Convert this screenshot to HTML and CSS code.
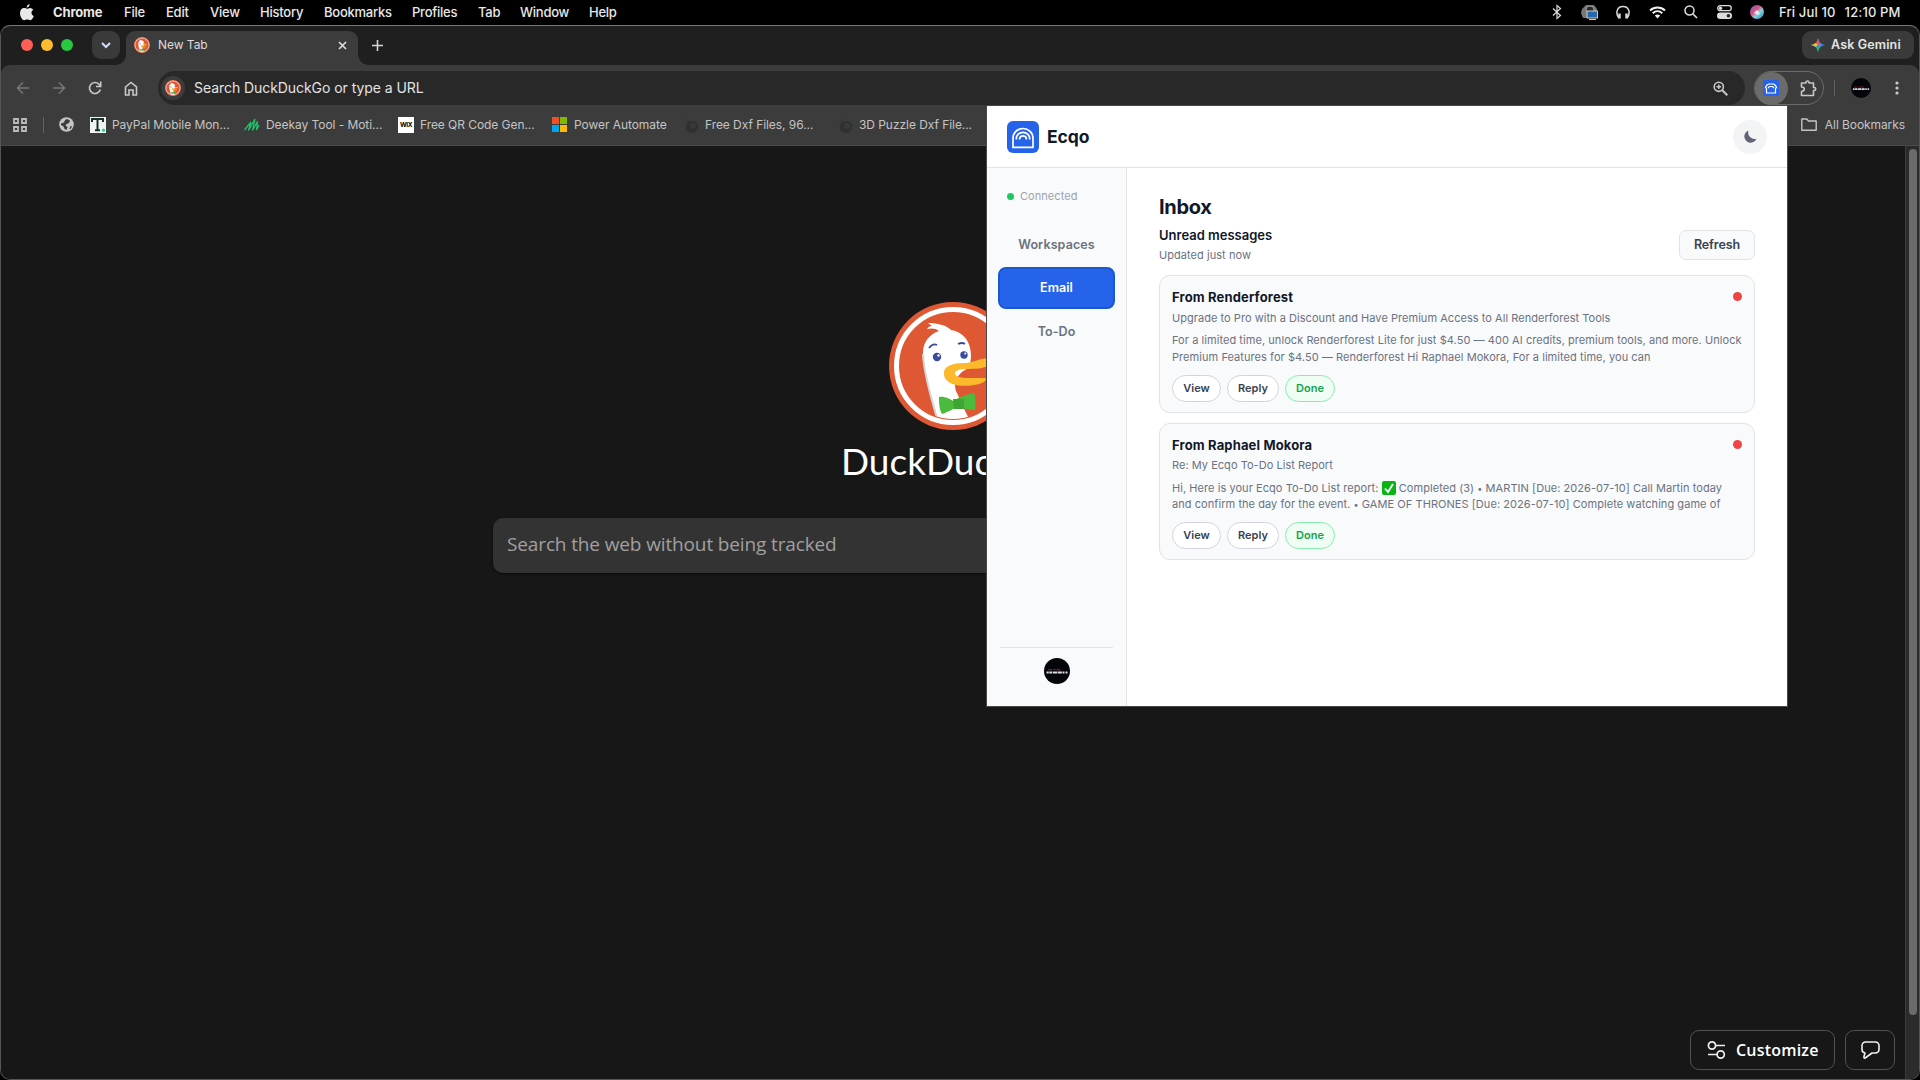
FILE: index.html
```html
<!DOCTYPE html>
<html lang="en">
<head>
<meta charset="utf-8">
<title>New Tab</title>
<link rel="stylesheet" href="styles.css">
</head>
<body>
<svg width="0" height="0" class="defs">
  <defs>
    <linearGradient id="siri" x1="0" y1="0" x2="1" y2="1"><stop offset="0" stop-color="#5b63c9"/><stop offset=".4" stop-color="#e0527e"/><stop offset=".6" stop-color="#7fd3e0"/><stop offset="1" stop-color="#1787a8"/></linearGradient>
    <clipPath id="disc"><circle cx="64" cy="64" r="53"/></clipPath>
    <symbol id="duck" viewBox="0 0 128 128">
      <circle cx="64" cy="64" r="64" fill="#de5833"/>
      <circle cx="64" cy="64" r="56.500" fill="none" stroke="#fff" stroke-width="5"/>
      <g clip-path="url(#disc)">
        <path d="M49 118C43 96 35 72 34 52c-.5-12 7-20 16-23-3-3-8-3-12-2 1-2 3-3 5-3l-4-3c9 0 18 2 23 7 13 2 20 12 20 26l-1 12c-10 2-20 15-12 27 3 9 9 19 13 28z" fill="#fff"/>
        <path d="M34 52c1 20 8 44 14 64" fill="none" stroke="#d5d7d8" stroke-width="2"/>
      </g>
      <path d="M55 71c0-9 13-10 22-10 9-1 14-5 24-5 6 1 1 8-8 10-9 2-26-1-27 5-1 6 16 5 30 5 3 2-2 6-11 7-17 3-31-2-30-12z" fill="#fcb92b"/>
      <path d="M50 95c5-1 11 2 14 4 6-4 15-7 21-8 2 5 2 13 1 17-5 0-12-2-17-3-5 2-12 6-16 7-3-5-3-12-3-17z" fill="#4cba3c"/>
      <path d="M64 97h11v10H65z" fill="#3ea532"/>
      <circle cx="48" cy="55" r="4.200" fill="#394a9f"/><circle cx="75" cy="53" r="3.700" fill="#394a9f"/>
      <circle cx="49.500" cy="53.500" r="1.200" fill="#fff"/><circle cx="76.300" cy="51.500" r="1.100" fill="#fff"/>
      <path d="M40 46q4-5 8-3M69 42q4-2 7 0" fill="none" stroke="#394a9f" stroke-width="1.800"/>
    </symbol>
    <symbol id="ecqo" viewBox="0 0 32 32">
      <rect width="32" height="32" rx="6" fill="#2563eb"/>
      <path d="M6 26.300V17a10 9.500 0 0 1 20 0v9.300zM9.300 18.500v-1a6.700 6.200 0 0 1 13.400 0v1" fill="none" stroke="#fff" stroke-width="1.700"/>
      <path d="M12.600 18.500v-.5a3.400 3.200 0 0 1 6.800 0v.5" fill="none" stroke="#fff" stroke-width="1.700"/>
    </symbol>
    <symbol id="avatar" viewBox="0 0 26 26">
      <circle cx="13" cy="13" r="13" fill="#03050a"/>
      <path d="M4 11.800h4M9.500 11.500h2M12.500 11.800h4" stroke="#a5262f" stroke-width="1"/>
      <path d="M2.500 14.500h2.200M5.300 14.500h3M9 14.500h4.200M13.800 14.500h4M18.500 14.500h2M21.500 14.500h2" stroke="#ddd" stroke-width="2.200"/>
    </symbol>
    <symbol id="drop" viewBox="0 0 16 16"><path d="M3 1l3 4c2-2 7-1 8 3 1 4-2 8-6 8s-7-3-6-7c0-2 1-3 2-4z" fill="#2f3131"/><circle cx="9" cy="9" r="3" fill="#383a3a"/></symbol>
  </defs>
</svg>

<header class="menubar">
  <svg class="apple" width="14" height="17" viewBox="0 0 14 17"><path d="M9.600 0c.2 1.700-1.200 3.500-2.900 3.500C6.500 1.900 8 .2 9.600 0zM7.100 4.700c.7 0 1.500-.8 2.800-.8 1.400 0 2.600.7 3.300 1.800-2.500 1.500-2.200 5.200.6 6.200-.6 1.700-2 4.200-3.500 4.300-1.200 0-1.600-.7-3-.7s-1.900.7-3 .7C2.400 16.200 0 12.600 0 9.200 0 5.900 2 4 4 4c1.300 0 2.300.7 3.100.7z" fill="#e8e8e8"/></svg>
  <nav class="menus">
    <b class="m1">Chrome</b><span class="m2">File</span><span class="m3">Edit</span><span class="m4">View</span><span class="m5">History</span><span class="m6">Bookmarks</span><span class="m7">Profiles</span><span class="m8">Tab</span><span class="m9">Window</span><span class="m10">Help</span>
  </nav>
  <div class="status">
    <svg width="10" height="16" viewBox="0 0 10 16"><path d="M1 4.500l7.500 7L5 14.500v-13l3.500 3L1 11.500" fill="none" stroke="#ddd" stroke-width="1.200"/></svg>
    <svg width="17" height="16" viewBox="0 0 17 16"><path d="M1 5l4-4h8l3 4v3H7v6H2L0 9z" fill="#777"/><circle cx="9" cy="6" r="4" fill="#292929" stroke="#999"/><rect x="6" y="7" width="10.500" height="7" fill="#2668ae" stroke="#ccc"/><path d="M8 15.500h7" stroke="#ccc"/></svg>
    <svg width="14" height="15" viewBox="0 0 14 15"><path d="M3 13C-1 8 1 1.500 7 1.500S15 8 11 13" fill="none" stroke="#ddd" stroke-width="1.500"/><path d="M3.500 8.500v5M10.500 8.500v5" stroke="#ddd" stroke-width="2.400"/></svg>
    <svg width="17" height="13" viewBox="0 0 17 13"><path d="M1 4.500c4.200-4 10.800-4 15 0M3.700 7.300c2.800-2.600 6.800-2.600 9.600 0" fill="none" stroke="#eee" stroke-width="2"/><path d="M5.800 9.500q2.700-2.200 5.400 0L8.500 12.500z" fill="#eee"/></svg>
    <svg width="14" height="14" viewBox="0 0 14 14"><circle cx="5.500" cy="5.500" r="4.500" fill="none" stroke="#ddd" stroke-width="1.500"/><path d="M9 9l4 4" stroke="#ddd" stroke-width="1.700"/></svg>
    <svg width="15" height="14" viewBox="0 0 15 14"><rect x=".7" y=".7" width="13.600" height="5" rx="2.500" fill="none" stroke="#ddd" stroke-width="1.300"/><circle cx="3.500" cy="3.200" r="1.700" fill="#ddd"/><rect y="7.500" width="15" height="6.500" rx="3.200" fill="#ddd"/><circle cx="11.400" cy="10.700" r="1.800" fill="#222"/></svg>
    <svg width="14" height="14" viewBox="0 0 14 14"><circle cx="7" cy="7" r="7" fill="url(#siri)"/><path d="M4 8q3-5 5-1t-3 2z" fill="#fff" opacity=".75"/></svg>
  </div>
  <div class="clock"><span>Fri Jul 10</span><span>12:10 PM</span></div>
</header>

<div class="window">
  <div class="tabstrip">
    <div class="lights"><i class="red"></i><i class="yellow"></i><i class="green"></i></div>
    <div class="chev"><svg width="10" height="7" viewBox="0 0 10 7"><path d="M1 1l4 4 4-4" fill="none" stroke="#d3dcff" stroke-width="2"/></svg></div>
    <div class="tab">
      <svg width="16" height="16"><use href="#duck"/></svg>
      <span class="tabtitle">New Tab</span>
      <svg class="close" width="9" height="9" viewBox="0 0 9 9"><path d="M1 1l7 7M8 1L1 8" stroke="#dedede" stroke-width="1.600"/></svg>
    </div>
    <svg class="plus" width="11" height="11" viewBox="0 0 11 11"><path d="M5.500 0v11M0 5.500h11" stroke="#d5d5d5" stroke-width="1.600"/></svg>
    <div class="gemini"><svg width="14" height="14" viewBox="0 0 14 14"><path d="M7 0q1 6 7 7-6 1-7 7-1-6-7-7 6-1 7-7z" fill="#4a86f0"/><path d="M7 0q.4 3 2 4.800L7 7 5 4.800Q6.600 3 7 0z" fill="#ea5348"/><path d="M0 7q3-.4 4.800-2L7 7 4.800 9Q3 7.400 0 7z" fill="#f3bd2c"/><path d="M7 14q-.4-3-2.200-5L7 7l1.500 2.500Q7.200 12 7 14z" fill="#2fae62"/></svg><span>Ask Gemini</span></div>
  </div>

  <div class="toolbar">
    <div class="nav">
      <svg width="14" height="14" viewBox="0 0 14 14"><path d="M13 7H2M7 1.500L1.500 7 7 12.500" fill="none" stroke="#777" stroke-width="1.500"/></svg>
      <svg width="14" height="14" viewBox="0 0 14 14"><path d="M1 7h11M7 1.500L12.500 7 7 12.500" fill="none" stroke="#777" stroke-width="1.500"/></svg>
      <svg width="14" height="14" viewBox="0 0 14 14"><path d="M12.300 8.500A5.500 5.500 0 1 1 11 3.200L12.500 5" fill="none" stroke="#c8c8c8" stroke-width="1.600"/><path d="M12.700.5V5.500H8" fill="none" stroke="#c8c8c8" stroke-width="1.600"/></svg>
      <svg width="14" height="15" viewBox="0 0 14 15"><path d="M1.500 6L7 1.500 12.500 6v8H9V9H5v5H1.500z" fill="none" stroke="#c8c8c8" stroke-width="1.600"/></svg>
    </div>
    <div class="omnibox">
      <span class="engine"><svg width="16" height="16"><use href="#duck"/></svg></span>
      <span class="hint">Search DuckDuckGo or type a URL</span>
      <svg class="mag" width="15" height="15" viewBox="0 0 15 15"><circle cx="5.800" cy="5.800" r="4.600" fill="none" stroke="#c8c8c8" stroke-width="1.600"/><path d="M9.300 9.300l5 5" stroke="#c8c8c8" stroke-width="2"/><path d="M5.800 3.500v4.600M3.500 5.800h4.600" stroke="#c8c8c8" stroke-width="1.500"/></svg>
    </div>
    <div class="exts">
      <span class="extactive"><svg width="16" height="16" viewBox="0 0 16 16"><rect width="16" height="16" rx="1.500" fill="#2563eb"/><path d="M3.500 13V8.500L2.500 7.500l1-2 2-1.500h5l2 1.500 1 2-1 1V13zM5 8l1.500-1.500h3L11 8" fill="none" stroke="#fff" stroke-width="1.200"/></svg></span>
      <svg class="puzzle" width="17" height="17" viewBox="0 0 17 17"><path d="M1.500 3h4.500V2.500a1.500 1.500 0 0 1 3 0V3h4.500v4.500h.7a1.500 1.500 0 0 1 0 3h-.7V15.500H1.500V11.500q2.800-.5 2.800-2.500T1.500 7z" fill="none" stroke="#c8c8c8" stroke-width="1.600" stroke-linejoin="round"/></svg>
    </div>
    <i class="divider"></i>
    <svg class="profile" width="20" height="20"><use href="#avatar"/></svg>
    <svg class="dots" width="4" height="14" viewBox="0 0 4 14"><circle cx="2" cy="2" r="1.600" fill="#ccc"/><circle cx="2" cy="7" r="1.600" fill="#ccc"/><circle cx="2" cy="12" r="1.600" fill="#ccc"/></svg>
  </div>

  <div class="bookmarks">
    <svg class="apps" width="14" height="14" viewBox="0 0 14 14"><path d="M1 1h4v4H1zM9 1h4v4H9zM1 9h4v4H1zM9 9h4v4H9z" fill="none" stroke="#bbb" stroke-width="1.800"/></svg>
    <i class="divider"></i>
    <svg class="globe" width="15" height="15" viewBox="0 0 15 15"><circle cx="7.500" cy="7.500" r="7.300" fill="#c4c4c4"/><path d="M8 2l3 1.500-1 2.500-2.500 1-1 1.500L8.500 10l-1 3-2-1-1-2.500L2 8V6.500l3-1L6 3zM11 9.500l2-.5-1 2.500-1.500 1z" fill="#3c3c3c"/></svg>
    <a class="bm b1"><svg width="16" height="16" viewBox="0 0 16 16"><rect width="16" height="16" fill="#f1f4f2"/><path d="M2 5V2h11v3M7.500 2v11M5 13.300h5" fill="none" stroke="#17302b" stroke-width="2"/><circle cx="13.500" cy="13.200" r="1.600" fill="#2ccf8e"/></svg><span>PayPal Mobile Mon...</span></a>
    <a class="bm b2"><svg width="16" height="14" viewBox="0 0 16 14"><path d="M.5 12L7 4 4.500 12.500 11 1 8.500 12.500 13.500 3.500 12.500 12l2.500-5" fill="none" stroke="#20c66b" stroke-width="1.200"/></svg><span>Deekay Tool - Moti...</span></a>
    <a class="bm b3"><i class="wix">WIX</i><span>Free QR Code Gen...</span></a>
    <a class="bm b4"><svg width="15" height="15" viewBox="0 0 15 15"><path d="M0 0h7v7H0z" fill="#f25022"/><path d="M8 0h7v7H8z" fill="#7fba00"/><path d="M0 8h7v7H0z" fill="#00a4ef"/><path d="M8 8h7v7H8z" fill="#ffb900"/></svg><span>Power Automate</span></a>
    <a class="bm b5"><svg width="16" height="16"><use href="#drop"/></svg><span>Free Dxf Files, 96...</span></a>
    <a class="bm b6"><svg width="16" height="16"><use href="#drop"/></svg><span>3D Puzzle Dxf File...</span></a>
    <a class="all"><svg width="16" height="13" viewBox="0 0 16 13"><path d="M.8 1h5l1.600 2h7.800v9.200H.8z" fill="none" stroke="#c4c4c4" stroke-width="1.400" stroke-linejoin="round"/></svg><span>All Bookmarks</span></a>
  </div>

  <div class="viewport">
    <main class="page">
      <svg class="ddg" width="128" height="128"><use href="#duck"/></svg>
      <div class="brand">DuckDuckGo</div>
      <div class="search">Search the web without being tracked</div>
      <div class="actions">
        <button class="customize"><svg width="19" height="18" viewBox="0 0 19 18"><circle cx="5" cy="4.500" r="3.600" fill="none" stroke="#eee" stroke-width="1.700"/><circle cx="13.700" cy="13.500" r="3.600" fill="none" stroke="#eee" stroke-width="1.700"/><path d="M9 4.500h9M1 13.500h9" stroke="#eee" stroke-width="1.700"/></svg><span>Customize</span></button>
        <button class="feedback"><svg width="19" height="18" viewBox="0 0 19 18"><path d="M4.500 1h10a3.500 3.500 0 0 1 3.500 3.500v4a3.500 3.500 0 0 1-3.500 3.500H11L4.200 17Q2.500 17.500 3 15.500L4 12Q1 11.500 1 8.500v-4A3.500 3.500 0 0 1 4.500 1z" fill="none" stroke="#eee" stroke-width="1.600" stroke-linejoin="round"/></svg></button>
      </div>
    </main>
    <div class="scroll"><i></i></div>
  </div>
</div>

<section class="popup">
  <header class="pophead">
    <svg width="32" height="32"><use href="#ecqo"/></svg>
    <span class="popname">Ecqo</span>
    <span class="theme"><svg width="13" height="13" viewBox="0 0 13 13"><path d="M4.500.5A6.300 6.300 0 1 0 12.500 8.800 6.500 6.500 0 0 1 4.500.5z" fill="#606477"/></svg></span>
  </header>
  <div class="popbody">
    <aside class="side">
      <div class="connected"><i></i><span>Connected</span></div>
      <div class="item ws">Workspaces</div>
      <div class="item active">Email</div>
      <div class="item">To-Do</div>
      <div class="user"><svg width="26" height="26"><use href="#avatar"/></svg></div>
    </aside>
    <div class="inbox">
      <h1><span>Inbox</span></h1>
      <div class="unread">
        <div><h2>Unread messages</h2><p>Updated just now</p></div>
        <button class="refresh">Refresh</button>
      </div>
      <article class="card">
        <div class="from"><h3>From Renderforest</h3><i></i></div>
        <div class="subject">Upgrade to Pro with a Discount and Have Premium Access to All Renderforest Tools</div>
        <div class="excerpt"><div>For a limited time, unlock Renderforest Lite for just $4.50 — 400 AI credits, premium tools, and more. Unlock</div><div>Premium Features for $4.50 — Renderforest Hi Raphael Mokora, For a limited time, you can</div></div>
        <div class="pills"><button class="view">View</button><button class="reply">Reply</button><button class="done">Done</button></div>
      </article>
      <article class="card">
        <div class="from"><h3>From Raphael Mokora</h3><i></i></div>
        <div class="subject">Re: My Ecqo To-Do List Report</div>
        <div class="excerpt"><div>Hi, Here is your Ecqo To-Do List report: <svg class="check" width="14" height="14" viewBox="0 0 14 14"><rect width="14" height="14" rx="2" fill="#08b514"/><path d="M3 7.500l3 3.500L11 3" fill="none" stroke="#fff" stroke-width="1.900"/></svg> Completed (3) <small>•</small> MARTIN [Due: 2026-07-10] Call Martin today</div><div>and confirm the day for the event. <small>•</small> GAME OF THRONES [Due: 2026-07-10] Complete watching game of</div></div>
        <div class="pills"><button class="view">View</button><button class="reply">Reply</button><button class="done">Done</button></div>
      </article>
    </div>
  </div>
</section>
</body>
</html>
```
FILE: styles.css
```css
* { box-sizing: border-box; }
html, body { margin: 0; width: 1920px; height: 1080px; overflow: hidden; background: #000; }
body { font-family: Inter, "Liberation Sans", sans-serif; color: #ddd; position: relative; display: flex; flex-direction: column; white-space: nowrap; }
svg { display: block; flex: none; }
i { font-style: normal; }
button { font: inherit; margin: 0; padding: 0; cursor: pointer; }
h1, h2, h3, p { margin: 0; }
.defs { position: absolute; }

.menubar { height: 25px; display: flex; align-items: center; padding-left: 20px; font-size: 13px; line-height: 16px; font-weight: 500; color: #e8e8e8; padding-bottom: 1px; }
.apple { width: 14px; }
.menus { display: flex; margin-left: 19px; flex: 1; padding-bottom: 1px; }
.m1 { width: 71px; font-weight: 700; letter-spacing: -.15px; }
.m2 { width: 42px; } .m3 { width: 44px; } .m4 { width: 50px; } .m5 { width: 64px; }
.m6 { width: 88px; } .m7 { width: 66px; } .m8 { width: 42px; } .m9 { width: 69px; }
.menus span { letter-spacing: -.24px; }
.status { display: flex; align-items: center; justify-content: space-between; width: 212px; margin-right: 15px; }
.clock { width: 141px; display: flex; gap: 9px; letter-spacing: .15px; padding-bottom: 1px; }

.window { height: 1055px; border: 1px solid #555; border-top-color: #777; border-radius: 10px; overflow: hidden; display: flex; flex-direction: column; background: #1f1f1f; }
.tabstrip { height: 39px; flex: none; display: flex; align-items: flex-start; padding: 5px 5px 0 20px; }
.lights { display: flex; gap: 8px; height: 28px; align-items: center; }
.lights i { width: 12px; height: 12px; border-radius: 50%; }
.red { background: #ff5f57; } .yellow { background: #febc2e; } .green { background: #28c840; }
.chev { width: 28px; height: 28px; border-radius: 9px; background: #3a3a3a; display: grid; place-items: center; margin-left: 19px; }
.tab { position: relative; width: 232px; height: 34px; margin-left: 6px; border-radius: 9px 9px 0 0; background: #3c3c3c; display: flex; align-items: center; padding: 0 11px 6px 8px; }
.tab::before, .tab::after { content: ""; position: absolute; bottom: 0; width: 10px; height: 10px; }
.tab::before { left: -10px; background: radial-gradient(circle at 0 0, transparent 9.500px, #3c3c3c 10px); }
.tab::after { right: -10px; background: radial-gradient(circle at 100% 0, transparent 9.500px, #3c3c3c 10px); }
.tabtitle { margin-left: 8px; font-size: 12px; line-height: 14px; padding-bottom: 1px; letter-spacing: -.05px; }
.close { margin-left: auto; }
.plus { margin: 9px 0 0 14px; }
.gemini { margin-left: auto; width: 112px; height: 28px; border-radius: 9px; background: #3a3a3a; display: flex; align-items: center; padding: 0 0 1px 9px; gap: 6px; font-size: 12.500px; font-weight: 600; letter-spacing: .15px; color: #e5e5e5; }

.toolbar { height: 46px; flex: none; background: #3c3c3c; border-radius: 9px 9px 0 0; display: flex; align-items: center; padding-left: 15px; }
.nav { display: flex; gap: 22px; align-items: center; width: 142px; }
.omnibox { width: 1587px; height: 34px; border-radius: 17px; background: #282828; display: flex; align-items: center; padding: 0 17px 0 3px; }
.engine { width: 24px; height: 24px; border-radius: 50%; background: #3c3c3c; display: grid; place-items: center; }
.hint { margin-left: 9px; font-size: 14px; line-height: 18px; padding-bottom: 1px; color: #e3e3e3; letter-spacing: -.06px; }
.mag { margin-left: auto; }
.exts { margin-left: 9px; width: 70px; height: 34px; border: 1px solid #6b6b6b; border-radius: 17px; display: flex; align-items: center; }
.extactive { width: 33px; height: 33px; border-radius: 50%; background: #6b6b6b; display: grid; place-items: center; }
.extactive svg { margin-right: 1px; }
.puzzle { margin-left: 12px; }
.divider { width: 1px; height: 16px; background: #626262; margin-left: 10px; flex: none; }
.profile { margin-left: 16px; } .dots { margin-left: 24px; }

.bookmarks { height: 35px; flex: none; background: #3c3c3c; border-bottom: 1px solid #4a4a4a; display: flex; align-items: center; padding: 0 14px 7px 12px; font-size: 12px; color: #c4c4c4; }
.bookmarks .divider { margin-left: 16px; }
.globe { margin-left: 15px; }
.bm { display: flex; align-items: center; gap: 6px; }
.b1 { margin-left: 16px; width: 154px; } .b2 { width: 154px; } .b3 { width: 154px; } .b4 { width: 132px; gap: 7px; } .b5 { width: 154px; }
.b5, .b6 { gap: 5px; }
.bm span { letter-spacing: -.06px; }
.wix { width: 16px; height: 16px; background: #fff; color: #000; font-size: 6.500px; font-weight: 700; display: grid; place-items: center; letter-spacing: -.4px; }
.all { margin-left: auto; display: flex; gap: 8px; align-items: center; letter-spacing: -.08px; }

.viewport { flex: 1; display: flex; background: #171717; }
.page { flex: 1; display: flex; flex-direction: column; align-items: center; padding-top: 156px; }
.brand { margin-top: 9px; font: 400 37px/44px Lato, sans-serif; color: #fff; width: 224px; }
.search { margin-top: 35px; width: 920px; height: 55px; border-radius: 10px; background: #333; box-shadow: 0 1px 3px #0008; color: #a0a0a0; font: 19px/53px "Open Sans", sans-serif; letter-spacing: -.13px; padding-left: 14px; }
.actions { margin-top: auto; align-self: flex-end; display: flex; gap: 10px; padding: 0 10px 9px 0; }
.actions button { height: 40px; background: #171717; border: 1px solid #515151; border-radius: 9px; color: #fff; display: flex; align-items: center; }
.actions .customize { width: 145px; padding-left: 16px; gap: 10px; font: 600 16px "Open Sans", sans-serif; letter-spacing: .2px; }
.feedback { width: 50px; justify-content: center; }
.scroll { width: 14px; background: #2b2b2b; border-left: 1px solid #3c3c3c; padding: 3px 3px 0 4px; }
.scroll i { display: block; width: 8px; height: 866px; border-radius: 4px; background: #6b6b6b; margin-left: -1px; }

.popup { position: absolute; left: 987px; top: 106px; width: 800px; height: 600px; background: #fff; box-shadow: 0 0 0 1px #484848; display: flex; flex-direction: column; color: #111827; }
.pophead { height: 62px; border-bottom: 1px solid #e1e3e6; display: flex; align-items: center; padding: 0 20px; flex: none; }
.popname { margin-left: 8px; font-size: 17.500px; font-weight: 700; letter-spacing: -.05px; }
.theme { margin-left: auto; width: 34px; height: 34px; border-radius: 50%; background: #f3f4f6; display: grid; place-items: center; }
.popbody { flex: 1; display: flex; }
.side { width: 140px; background: #f9fafc; border-right: 1px solid #e1e3e6; display: flex; flex-direction: column; padding: 0 11px; }
.connected { display: flex; align-items: center; gap: 6px; height: 16px; margin: 20px 0 19px 9px; font-size: 11px; letter-spacing: .05px; color: #9ca3af; }
.connected i { width: 7px; height: 7px; border-radius: 50%; background: #22c55e; }
.item { height: 42px; margin-bottom: 2px; display: grid; place-items: center; font-size: 12.500px; line-height: 16px; padding-bottom: 1px; font-weight: 600; letter-spacing: .08px; color: #6b7280; }
.ws { padding: 1px 0 0; letter-spacing: .12px; }
.active { background: #2563eb; border: 2px solid #1a58d0; border-radius: 8px; color: #fff; }
.user { margin: auto 2px 0; border-top: 1px solid #e1e3e6; height: 59px; padding-top: 10px; display: flex; justify-content: center; }
.inbox { flex: 1; padding: 26px 32px 0; }
h1 { font-size: 20px; line-height: 26px; font-weight: 700; letter-spacing: -.3px; }
.unread { display: flex; justify-content: space-between; margin-top: 6px; height: 42px; }
h2 { font-size: 13px; line-height: 18px; font-weight: 600; letter-spacing: 0; }
.unread p { font-size: 11px; line-height: 15px; margin-top: 4px; letter-spacing: .05px; color: #6b7280; }
.refresh { width: 76px; height: 30px; margin-top: 4px; border: 1px solid #e1e3e6; border-radius: 7px; background: #f9fafc; color: #374151; font-size: 12.500px; line-height: 16px; padding-bottom: 1px; font-weight: 600; letter-spacing: -.1px; }
.card { height: 138px; margin-top: 7px; border: 1px solid #e1e3e6; border-radius: 11px; background: #f9fafc; padding: 13px 12px; }
.card + .card { height: 137px; margin-top: 10px; }
.from { display: flex; justify-content: space-between; height: 17px; }
.from i { width: 9px; height: 9px; border-radius: 50%; background: #ef4444; margin-top: 3px; }
h3 { font-size: 13px; line-height: 17px; font-weight: 700; letter-spacing: .15px; }
.subject, .excerpt { color: #6b7280; font-size: 11px; letter-spacing: .06px; }
.subject { line-height: 15px; margin-top: 5px; letter-spacing: .04px; }
.card + .card .subject { margin-top: 4px; margin-bottom: 7px; }
.excerpt { line-height: 16.500px; margin-top: 6px; }
.excerpt div { height: 16.500px; }
.card + .card .excerpt { margin-top: 0; }
.card + .card .excerpt div + div { margin-top: -.5px; }
small { font-size: 9px; line-height: 1; }
.check { display: inline-block; vertical-align: top; margin: 1px 0 -1px; }
.pills { display: flex; gap: 6px; margin-top: 10px; }
.card + .card .pills { margin-top: 9px; }
.pills button { height: 27px; border: 1px solid #d1d5db; border-radius: 14px; background: #fff; color: #374151; font-size: 11px; line-height: 14px; padding-bottom: 1px; font-weight: 600; }
.view { width: 49px; } .reply { width: 52px; }
.pills .done { width: 50px; background: #f0fdf4; border-color: #86efac; color: #16a34a; }
```
